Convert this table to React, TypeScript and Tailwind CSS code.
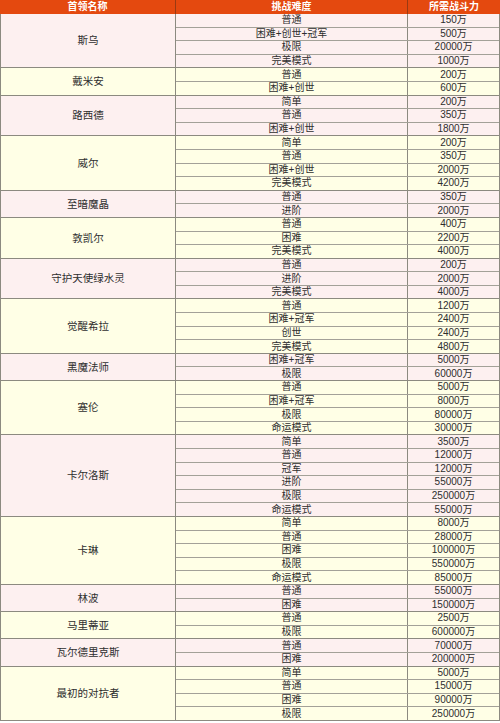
import React from "react";

interface Row {
  level: string;
  power: string;
}

interface Boss {
  name: string;
  rows: Row[];
}

const bosses: Boss[] = [
  { name: "斯乌", rows: [
    { level: "普通", power: "150万" },
    { level: "困难+创世+冠军", power: "500万" },
    { level: "极限", power: "20000万" },
    { level: "完美模式", power: "1000万" },
  ] },
  { name: "戴米安", rows: [
    { level: "普通", power: "200万" },
    { level: "困难+创世", power: "600万" },
  ] },
  { name: "路西德", rows: [
    { level: "简单", power: "200万" },
    { level: "普通", power: "350万" },
    { level: "困难+创世", power: "1800万" },
  ] },
  { name: "威尔", rows: [
    { level: "简单", power: "200万" },
    { level: "普通", power: "350万" },
    { level: "困难+创世", power: "2000万" },
    { level: "完美模式", power: "4200万" },
  ] },
  { name: "至暗魔晶", rows: [
    { level: "普通", power: "350万" },
    { level: "进阶", power: "2000万" },
  ] },
  { name: "敦凯尔", rows: [
    { level: "普通", power: "400万" },
    { level: "困难", power: "2200万" },
    { level: "完美模式", power: "4000万" },
  ] },
  { name: "守护天使绿水灵", rows: [
    { level: "普通", power: "200万" },
    { level: "进阶", power: "2000万" },
    { level: "完美模式", power: "4000万" },
  ] },
  { name: "觉醒希拉", rows: [
    { level: "普通", power: "1200万" },
    { level: "困难+冠军", power: "2400万" },
    { level: "创世", power: "2400万" },
    { level: "完美模式", power: "4800万" },
  ] },
  { name: "黑魔法师", rows: [
    { level: "困难+冠军", power: "5000万" },
    { level: "极限", power: "60000万" },
  ] },
  { name: "塞伦", rows: [
    { level: "普通", power: "5000万" },
    { level: "困难+冠军", power: "8000万" },
    { level: "极限", power: "80000万" },
    { level: "命运模式", power: "30000万" },
  ] },
  { name: "卡尔洛斯", rows: [
    { level: "简单", power: "3500万" },
    { level: "普通", power: "12000万" },
    { level: "冠军", power: "12000万" },
    { level: "进阶", power: "55000万" },
    { level: "极限", power: "250000万" },
    { level: "命运模式", power: "55000万" },
  ] },
  { name: "卡琳", rows: [
    { level: "简单", power: "8000万" },
    { level: "普通", power: "28000万" },
    { level: "困难", power: "100000万" },
    { level: "极限", power: "550000万" },
    { level: "命运模式", power: "85000万" },
  ] },
  { name: "林波", rows: [
    { level: "普通", power: "55000万" },
    { level: "困难", power: "150000万" },
  ] },
  { name: "马里蒂亚", rows: [
    { level: "普通", power: "2500万" },
    { level: "极限", power: "600000万" },
  ] },
  { name: "瓦尔德里克斯", rows: [
    { level: "普通", power: "70000万" },
    { level: "困难", power: "200000万" },
  ] },
  { name: "最初的对抗者", rows: [
    { level: "简单", power: "5000万" },
    { level: "普通", power: "15000万" },
    { level: "困难", power: "90000万" },
    { level: "极限", power: "250000万" },
  ] },
];

export default function App() {
  return (
    <div
      className="w-[500px] h-[723px] bg-white text-[10px] leading-none text-[#2e2e2e]"
      style={{ fontFamily: '"Liberation Sans", "Noto Sans CJK SC", sans-serif' }}
    >
      {/* Header */}
      <div className="flex h-[14px] bg-[#e4490f] text-white font-bold">
        <div className="w-[176px] flex items-center justify-center border-r border-[#9a3a12]">首领名称</div>
        <div className="w-[232px] flex items-center justify-center border-r border-[#9a3a12]">挑战难度</div>
        <div className="flex-1 flex items-center justify-center">所需战斗力</div>
      </div>

      {/* Body */}
      <div className="border-l border-r border-[#8c8a80]">
        {bosses.map((boss, i) => {
          const bg = i % 2 === 0 ? "bg-[#fdf0f0]" : "bg-[#ffffe6]";
          return (
            <div key={boss.name} className={`flex border-b border-[#8c8a80] ${bg}`}>
              <div className="w-[175px] flex items-center justify-center border-r border-[#8c8a80] text-[10.5px]">
                {boss.name}
              </div>
              <div className="flex-1 flex flex-col">
                {boss.rows.map((r, j) => {
                  const last = j === boss.rows.length - 1;
                  return (
                    <div
                      key={j}
                      className={last ? "flex h-[12.6px]" : "flex h-[13.6px] border-b border-[#a3a198]"}
                    >
                      <div className="w-[232px] flex items-center justify-center border-r border-[#8c8a80]">
                        {r.level}
                      </div>
                      <div className="flex-1 flex items-center justify-center">{r.power}</div>
                    </div>
                  );
                })}
              </div>
            </div>
          );
        })}
      </div>
    </div>
  );
}
